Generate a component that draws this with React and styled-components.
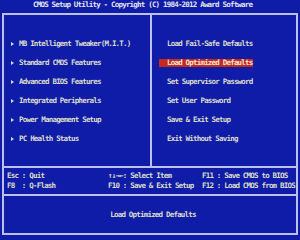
import React from 'react';
import styled, { createGlobalStyle } from 'styled-components';

const GlobalStyle = createGlobalStyle`
  html, body {
    margin: 0;
    padding: 0;
    background: #0e1ca8;
  }
`;

const Screen = styled.div`
  width: 300px;
  height: 240px;
  background: #0e1ca8;
  color: #dcdccc;
  font-family: "DejaVu Sans Mono", "Liberation Mono", monospace;
  font-weight: bold;
  font-size: 7.5px;
  letter-spacing: -0.8px;
  white-space: pre;
  display: flex;
  flex-direction: column;
  box-sizing: border-box;
  padding: 0 0 5px 2px;
  overflow: hidden;
`;

const Title = styled.div`
  height: 13px;
  line-height: 9px;
  padding-left: 31px;
  color: #e4e4ec;
`;

const Frame = styled.div`
  width: 296px;
  flex: 1;
  box-sizing: border-box;
  border: 2px solid #bcc0ec;
  display: flex;
  flex-direction: column;
`;

const Menu = styled.div`
  height: 151px;
  display: grid;
  grid-template-columns: 148px 1fr;
`;

const Column = styled.ul`
  list-style: none;
  margin: 0;
  padding: 19px 0 0 ${p => p.$indent}px;
  border-right: ${p => (p.$divider ? '2px solid #bcc0ec' : 'none')};
`;

const Item = styled.li`
  height: 19px;
  display: flex;
  align-items: center;
  gap: 5px;
`;

const Arrow = styled.span`
  width: 0;
  height: 0;
  border-top: 2.5px solid transparent;
  border-bottom: 2.5px solid transparent;
  border-left: 3px solid #dcdccc;
`;

const Label = styled.span`
  line-height: 8px;
  padding: 0 1px 0 ${p => (p.$plain ? 0 : 8)}px;
  background: ${p => (p.$active ? '#c42a1c' : 'transparent')};
  color: ${p => (p.$active ? '#f0e8d8' : 'inherit')};
`;

const Footer = styled.div`
  height: 28px;
  box-sizing: border-box;
  border-top: 2px solid #bcc0ec;
  padding: 3px 0 0 3px;
  display: grid;
  grid-template-columns: 101px 94px auto;
  grid-auto-rows: 10px;
  align-items: center;
`;

const Key = styled.span`
  line-height: 10px;
`;

const Status = styled.div`
  flex: 1;
  border-top: 2px solid #bcc0ec;
  display: flex;
  align-items: center;
  justify-content: center;
  padding-left: 6px;
`;

const left = [
  'MB Intelligent Tweaker(M.I.T.)',
  'Standard CMOS Features',
  'Advanced BIOS Features',
  'Integrated Peripherals',
  'Power Management Setup',
  'PC Health Status',
];

const right = [
  'Load Fail-Safe Defaults',
  'Load Optimized Defaults',
  'Set Supervisor Password',
  'Set User Password',
  'Save & Exit Setup',
  'Exit Without Saving',
];

const keys = [
  'Esc : Quit',
  '\u2191\u2193\u2192\u2190: Select Item',
  'F11 : Save CMOS to BIOS',
  'F8  : Q-Flash',
  'F10 : Save & Exit Setup',
  'F12 : Load CMOS from BIOS',
];

const App = () => {
  const selected = 1;

  return (
    <>
      <GlobalStyle />
      <Screen>
        <Title>CMOS Setup Utility - Copyright (C) 1984-2012 Award Software</Title>
        <Frame>
          <Menu>
            <Column $divider $indent={7}>
              {left.map(text => (
                <Item key={text}>
                  <Arrow />
                  <Label $plain>{text}</Label>
                </Item>
              ))}
            </Column>
            <Column $indent={7}>
              {right.map((text, i) => (
                <Item key={text}>
                  <Label $active={i === selected}>{text}</Label>
                </Item>
              ))}
            </Column>
          </Menu>
          <Footer>
            {keys.map(k => (
              <Key key={k}>{k}</Key>
            ))}
          </Footer>
          <Status>{right[selected]}</Status>
        </Frame>
      </Screen>
    </>
  );
};

export default App;
